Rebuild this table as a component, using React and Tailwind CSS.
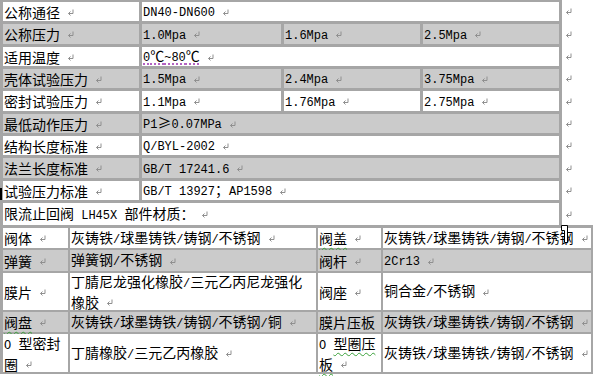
import clsx from "clsx";

const GRAY = "bg-[#cbcbcb]";

function T({ s }) {
  const parts = s.match(/[\x00-\x7f]+|[^\x00-\x7f]+/g) || [];
  return parts.map((p, i) =>
    /[\x00-\x7f]/.test(p[0]) ? (
      <span key={i} className="font-['Liberation_Mono',monospace] text-[12px]">
        {p}
      </span>
    ) : (
      <span key={i} className="font-['Noto_Sans_CJK_SC',sans-serif] text-[14px]">
        {p}
      </span>
    )
  );
}

function Mark({ className }) {
  return (
    <svg width="7" height="7" viewBox="0 0 7 7" className={clsx("inline-block shrink-0", className)}>
      <path d="M6 0.5V4.5H1.5" fill="none" stroke="#8f8f8f" strokeWidth="1" />
      <path d="M3.5 2.5L1.5 4.5L3.5 6.5" fill="none" stroke="#8f8f8f" strokeWidth="1" />
    </svg>
  );
}

function Cell({ gray, span, children, mark = true }) {
  return (
    <div
      className={clsx(
        "flex items-center pl-[1px] leading-[18px] text-black whitespace-nowrap overflow-visible",
        gray ? GRAY : "bg-white",
        span
      )}
    >
      <span>{children}</span>
      {mark && <Mark className="ml-[7px] mt-[1px]" />}
    </div>
  );
}

const topRows = [
  { gray: false, cells: ["公称通径", ["DN40-DN600", 3]] },
  { gray: true, cells: ["公称压力", "1.0Mpa", "1.6Mpa", "2.5Mpa"] },
  { gray: false, cells: ["适用温度", ["0℃~80℃", 3, "dotted"]] },
  { gray: true, cells: ["壳体试验压力", "1.5Mpa", "2.4Mpa", "3.75Mpa"] },
  { gray: false, cells: ["密封试验压力", "1.1Mpa", "1.76Mpa", "2.75Mpa"] },
  { gray: true, cells: ["最低动作压力", ["P1≥0.07MPa", 3]] },
  { gray: false, cells: ["结构长度标准", ["Q/BYL-2002", 3]] },
  { gray: true, cells: ["法兰长度标准", ["GB/T 17241.6", 3]] },
  { gray: false, cells: ["试验压力标准", ["GB/T 13927；AP1598", 3]] },
];

const rowHeights = [19, 20, 19, 19, 20, 19, 19, 20, 19, 22];

function TopTable() {
  return (
    <div className="flex">
      <div className="grid w-[562px] grid-cols-[136px_139px_136px_136px] grid-rows-[19px_20px_19px_19px_20px_19px_19px_20px_19px_22px] gap-[3px] bg-[#a6a6a6] pl-[3px] pt-[2px]">
        {topRows.map((row, r) =>
          row.cells.map((c, i) => {
            if (Array.isArray(c)) {
              const [text, n, deco] = c;
              return (
                <Cell key={r + "-" + i} gray={row.gray} span={n === 3 ? "col-span-3" : ""}>
                  <span
                    className={clsx(
                      deco === "dotted" &&
                        "underline decoration-dotted decoration-[#9b30b0] underline-offset-[3px]"
                    )}
                  >
                    <T s={text} />
                  </span>
                </Cell>
              );
            }
            return (
              <Cell key={r + "-" + i} gray={row.gray}>
                <T s={c} />
              </Cell>
            );
          })
        )}
        <Cell span="col-span-4">
          <T s="限流止回阀 LH45X 部件材质：" />
        </Cell>
      </div>
      {/* row-end marks beside the table */}
      <div className="flex flex-col gap-[3px] pl-[3px] pt-[2px]">
        {rowHeights.map((h, i) => (
          <div key={i} className="flex items-center" style={{ height: h }}>
            <Mark />
          </div>
        ))}
      </div>
    </div>
  );
}

const wavy = "underline decoration-wavy decoration-[#3aa13a] decoration-1 underline-offset-[3px]";

function BottomTable() {
  return (
    <div className="grid w-[593px] grid-cols-[65px_246px_63px_208px] grid-rows-[20px_21px_37px_20px_38px] gap-[2px] bg-[#a6a6a6] pb-[2px] pl-[3px] pt-[3px]">
      <Cell>
        <T s="阀体" />
      </Cell>
      <Cell>
        <T s="灰铸铁/球墨铸铁/铸钢/不锈钢" />
      </Cell>
      <Cell>
        <span className={wavy}>
          <T s="阀盖" />
        </span>
      </Cell>
      <Cell>
        <T s="灰铸铁/球墨铸铁/铸钢/不锈钢" />
      </Cell>

      <Cell gray>
        <T s="弹簧" />
      </Cell>
      <Cell gray>
        <T s="弹簧钢/不锈钢" />
      </Cell>
      <Cell gray>
        <T s="阀杆" />
      </Cell>
      <Cell gray>
        <T s="2Cr13" />
      </Cell>

      <Cell>
        <T s="膜片" />
      </Cell>
      <div className="flex flex-col justify-center bg-white pl-[1px] leading-[18px] whitespace-nowrap">
        <span>
          <T s="丁腈尼龙强化橡胶/三元乙丙尼龙强化" />
        </span>
        <span className="flex items-center">
          <T s="橡胶" />
          <Mark className="ml-[7px] mt-[1px]" />
        </span>
      </div>
      <Cell>
        <T s="阀座" />
      </Cell>
      <Cell>
        <T s="铜合金/不锈钢" />
      </Cell>

      <Cell gray>
        <span className={wavy}>
          <T s="阀盘" />
        </span>
      </Cell>
      <Cell gray>
        <T s="灰铸铁/球墨铸铁/铸钢/不锈钢/铜" />
      </Cell>
      <Cell gray mark={false}>
        <T s="膜片压板" />
      </Cell>
      <Cell gray>
        <T s="灰铸铁/球墨铸铁/铸钢/不锈钢" />
      </Cell>

      <div className="flex flex-col justify-center bg-white pl-[1px] leading-[18px] whitespace-nowrap">
        <span>
          <T s="O 型密封" />
        </span>
        <span className="flex items-center">
          <T s="圈" />
          <Mark className="ml-[7px] mt-[1px]" />
        </span>
      </div>
      <Cell>
        <T s="丁腈橡胶/三元乙丙橡胶" />
      </Cell>
      <div className="flex flex-col justify-center bg-white pl-[1px] leading-[18px] whitespace-nowrap">
        <span>
          <T s="O " />
          <span className={wavy}>
            <T s="型圈压" />
          </span>
        </span>
        <span className="flex items-center">
          <span className={wavy}>
            <T s="板" />
          </span>
          <Mark className="ml-[7px] mt-[1px]" />
        </span>
      </div>
      <Cell>
        <T s="灰铸铁/球墨铸铁/铸钢/不锈钢" />
      </Cell>
    </div>
  );
}

export default function App() {
  return (
    <div className="relative h-[376px] w-[594px] overflow-hidden bg-white">
      <TopTable />
      <BottomTable />
      {/* small black selection tick at the left edge */}
      <div className="absolute left-0 top-[188px] h-[12px] w-[2px] bg-black" />
      {/* mouse cursor over the table corner */}
      <svg width="8" height="18" viewBox="0 0 8 18" className="absolute left-[561px] top-[225px]">
        <path d="M0.5 0.5H6.5V17.5H3.5V5.5H0.5Z" fill="#fff" stroke="#000" strokeWidth="1" />
      </svg>
    </div>
  );
}
